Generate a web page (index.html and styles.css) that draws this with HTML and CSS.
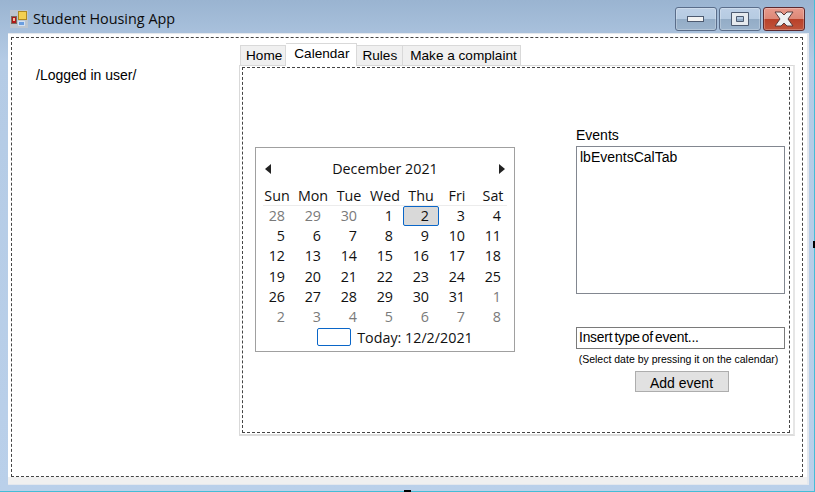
FILE: index.html

```html
<!DOCTYPE html>
<html>
<head>
    <title>Student Housing App</title>
    <link rel="stylesheet" href="styles.css">
</head>
<body>
    <div class="window">
        <div class="title-bar">
            <svg class="app-icon" width="18" height="18" viewBox="0 0 18 18">
                <rect x="0" y="0" width="18" height="18" fill="#bcc5cf"/>
                <rect x="1.5" y="6.5" width="5" height="7" fill="#b01818" stroke="#7a6a60"/>
                <rect x="3" y="8" width="2" height="3" fill="#f0c0a0"/>
                <rect x="8.5" y="1.5" width="8" height="8" fill="#f4d050" stroke="#b08a20"/>
                <rect x="8.5" y="11.5" width="6" height="4" fill="#6a9ee0" stroke="#d0e0f4"/>
            </svg>
            <span class="app-title">Student Housing App</span>
            <div class="window-buttons">
                <div class="win-btn">
                    <svg width="18" height="8" viewBox="0 0 18 8"><rect x="0.5" y="1.5" width="16" height="5" fill="#f2f2f2" stroke="#4d5a70"/></svg>
                </div>
                <div class="win-btn">
                    <svg width="18" height="15" viewBox="0 0 18 15"><path d="M0.5 0.5h17v13h-17zM5.5 4.5v5h7v-5z" fill="#e6eaee" fill-rule="evenodd" stroke="#4d5a70"/></svg>
                </div>
                <div class="win-btn close-btn">
                    <svg width="20" height="16" viewBox="0 0 20 16"><path d="M1 1h6l3 3 3-3h6l-5 7 5 7h-6l-3-3-3 3h-6l5-7z" fill="#eef0f2" stroke="#5a3a3a"/></svg>
                </div>
            </div>
        </div>

        <div class="client">
            <div class="main-layout">
                <div class="user-panel">/Logged in user/</div>
                <div class="tab-area">
                    <div class="tabs">
                        <div class="tab">Home</div>
                        <div class="tab tab-active">Calendar</div>
                        <div class="tab">Rules</div>
                        <div class="tab">Make a complaint</div>
                    </div>
                    <div class="tab-panel">
                        <div class="tab-layout">
                            <div class="calendar">
                                <div class="cal-head">
                                    <span class="arrow arrow-left"></span>
                                    <span>December 2021</span>
                                    <span class="arrow arrow-right"></span>
                                </div>
                                <div class="cal-days">
                                    <span>Sun</span><span>Mon</span><span>Tue</span><span>Wed</span><span>Thu</span><span>Fri</span><span>Sat</span>
                                </div>
                                <div class="cal-grid">
                                    <span class="muted">28</span><span class="muted">29</span><span class="muted">30</span><span>1</span><span class="selected">2</span><span>3</span><span>4</span>
                                    <span>5</span><span>6</span><span>7</span><span>8</span><span>9</span><span>10</span><span>11</span>
                                    <span>12</span><span>13</span><span>14</span><span>15</span><span>16</span><span>17</span><span>18</span>
                                    <span>19</span><span>20</span><span>21</span><span>22</span><span>23</span><span>24</span><span>25</span>
                                    <span>26</span><span>27</span><span>28</span><span>29</span><span>30</span><span>31</span><span class="muted">1</span>
                                    <span class="muted">2</span><span class="muted">3</span><span class="muted">4</span><span class="muted">5</span><span class="muted">6</span><span class="muted">7</span><span class="muted">8</span>
                                </div>
                                <div class="cal-today">
                                    <span class="today-box"></span>
                                    <span>Today: 12/2/2021</span>
                                </div>
                            </div>
                            <div class="events">
                                <div class="events-label">Events</div>
                                <div class="events-list">lbEventsCalTab</div>
                                <div class="event-input">Insert type of event...</div>
                                <div class="event-hint">(Select date by pressing it on the calendar)</div>
                                <div class="add-btn">Add event</div>
                            </div>
                        </div>
                    </div>
                </div>
            </div>
        </div>
        <div class="mark-bottom"></div>
        <div class="mark-right"></div>
    </div>
</body>
</html>
```

FILE: styles.css

```css
html, body {
    margin: 0;
    padding: 0;
    overflow: hidden;
}

body {
    width: 815px;
    height: 492px;
    font-family: "Liberation Sans", Arial, sans-serif;
    font-size: 14px;
    color: #000;
}

.window {
    position: relative;
    width: 815px;
    height: 492px;
    box-sizing: border-box;
    padding: 0 7px 7px 8px;
    background: linear-gradient(to bottom, #9ab4d1 0, #b4cbe5 60px, #bad0ea 100%);
    border-bottom: 1px solid #45bcd6;
    border-right: 1px solid #45bcd6;
    display: flex;
    flex-direction: column;
}

.title-bar {
    height: 34px;
    flex: none;
    display: flex;
    align-items: flex-start;
}

.app-icon {
    margin: 10px 0 0 2px;
}

.app-title {
    margin: 9px 0 0 5px;
    font-family: "Open Sans", sans-serif;
    font-size: 14.4px;
    line-height: 20px;
    color: #0c0c0c;
}

.window-buttons {
    margin: 7px 2px 0 auto;
    display: flex;
    gap: 2px;
}

.win-btn {
    width: 42px;
    height: 24px;
    box-sizing: border-box;
    border: 1px solid #5a6d8a;
    border-radius: 3px;
    background: linear-gradient(to bottom, #bdd0e6 0, #b6cbe2 48%, #93acc6 52%, #9cb4cd 100%);
    box-shadow: inset 0 0 0 1px rgba(255, 255, 255, 0.25);
    display: flex;
    align-items: center;
    justify-content: center;
}

.close-btn {
    border-color: #5c2a30;
    background: linear-gradient(to bottom, #e89a8c 0, #dd8878 48%, #b9412a 52%, #c0543c 100%);
}

.client {
    flex: 1;
    box-sizing: border-box;
    padding: 3px 4px 0 3px;
    background: #fff;
    border-bottom: 7px solid #f0f0f0;
    box-shadow: 1px 0 0 1px #e4e8ee;
}

.main-layout {
    height: 100%;
    box-sizing: border-box;
    border: 1px dashed #444;
    display: flex;
}

.user-panel {
    width: 227px;
    flex: none;
    box-sizing: border-box;
    padding: 29px 0 0 24px;
    line-height: 16px;
}

.tab-area {
    width: 556px;
    flex: none;
    padding-top: 5px;
}

.tabs {
    height: 22px;
    display: flex;
    align-items: flex-end;
    padding-left: 1px;
    font-size: 13.6px;
}

.tab {
    height: 20px;
    box-sizing: border-box;
    padding: 2px 3px 0 7px;
    background: #f0f0f0;
    border: 1px solid #d9d9d9;
    border-bottom: none;
    border-left: none;
    line-height: 16px;
    white-space: nowrap;
}

.tab:first-child {
    padding-left: 5px;
    border-left: 1px solid #d9d9d9;
}

.tab:nth-child(3) {
    padding: 2px 5px 0 5px;
}

.tab-active {
    height: 23px;
    margin-bottom: -1px;
    padding: 2px 7px 0 8px;
    background: #fff;
    position: relative;
    z-index: 1;
}

.tab-panel {
    width: 556px;
    height: 371px;
    box-sizing: border-box;
    padding: 1px 3px 1px 2px;
    background: #fff;
    border: 1px solid #d9d9d9;
    border-right: 2px solid #e6e6e6;
    border-bottom: 2px solid #dcdcdc;
}

.tab-layout {
    height: 100%;
    box-sizing: border-box;
    border: 1px dashed #444;
    display: flex;
}

.calendar {
    width: 260px;
    height: 205px;
    flex: none;
    box-sizing: border-box;
    margin: 79px 0 0 12px;
    padding: 0 3px;
    border: 1px solid #a0a0a0;
    font-family: "Open Sans", sans-serif;
    font-size: 14.3px;
    color: #111;
}

.cal-head {
    height: 33px;
    padding: 8px 6px 0;
    display: flex;
    align-items: center;
    justify-content: space-between;
    box-sizing: border-box;
    line-height: 18px;
}

.arrow {
    width: 0;
    height: 0;
    border-top: 5px solid transparent;
    border-bottom: 5px solid transparent;
}

.arrow-left {
    border-right: 6px solid #222;
}

.arrow-right {
    border-left: 6px solid #222;
}

.cal-days {
    display: grid;
    grid-template-columns: repeat(7, 36px);
    height: 25px;
    box-sizing: border-box;
    padding-top: 6px;
    line-height: 18px;
    text-align: center;
    background: linear-gradient(#ececec, #ececec) no-repeat 4px 100% / 244px 1px;
}

.cal-grid {
    display: grid;
    grid-template-columns: repeat(7, 36px);
    grid-auto-rows: 20.2px;
    line-height: 20px;
    text-align: right;
}

.cal-grid span {
    padding-right: 10px;
    box-sizing: border-box;
}

.cal-grid .muted {
    color: #7a7a7a;
}

.cal-grid .selected {
    background: #d9d9d9;
    border: 1px solid #0a66c8;
    border-radius: 2px;
    padding-right: 9px;
    line-height: 18px;
}

.cal-today {
    display: flex;
    justify-content: center;
    align-items: center;
    gap: 6px;
    height: 20px;
    margin-left: 20px;
}

.today-box {
    width: 34px;
    height: 18px;
    box-sizing: border-box;
    border: 1px solid #0a66c8;
    border-radius: 2px;
}

.events {
    width: 209px;
    flex: none;
    margin: 60px 0 0 61px;
    display: flex;
    flex-direction: column;
    align-items: center;
}

.events-label {
    align-self: flex-start;
    height: 18px;
    line-height: 14px;
}

.events-list {
    align-self: stretch;
    height: 148px;
    box-sizing: border-box;
    padding: 2px 3px;
    border: 1px solid #828790;
    line-height: 16px;
}

.event-input {
    align-self: stretch;
    height: 22px;
    margin-top: 33px;
    box-sizing: border-box;
    padding: 2px;
    border: 1px solid #7a7a7a;
    font-size: 13.8px;
    line-height: 16px;
    letter-spacing: -0.2px;
    word-spacing: -1.5px;
}

.event-hint {
    margin: 3px 4px 0 0;
    height: 19px;
    font-size: 10.5px;
    line-height: 15px;
    white-space: nowrap;
}

.add-btn {
    width: 94px;
    height: 21px;
    margin-left: 2px;
    box-sizing: border-box;
    background: #e1e1e1;
    border: 1px solid #adadad;
    text-align: center;
    line-height: 22px;
}

.mark-bottom {
    position: absolute;
    left: 404px;
    bottom: -1px;
    width: 7px;
    height: 2px;
    background: #000;
}

.mark-right {
    position: absolute;
    right: -1px;
    top: 241px;
    width: 2px;
    height: 7px;
    background: #000;
}
```
